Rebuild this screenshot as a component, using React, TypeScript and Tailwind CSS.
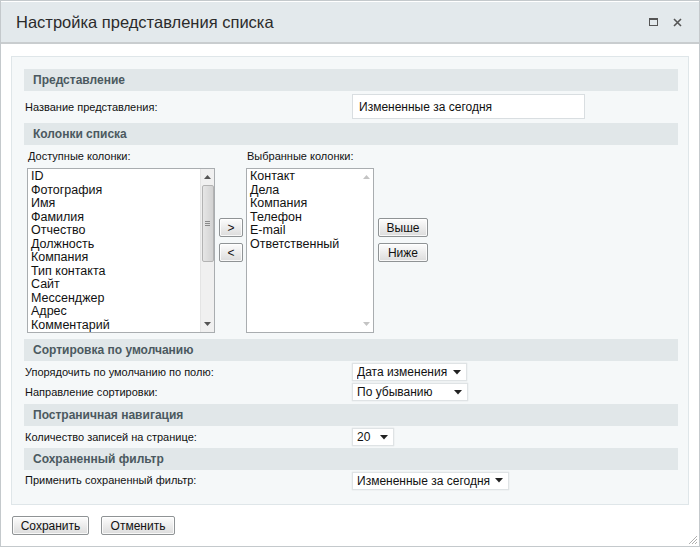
import React from "react";

const font = { fontFamily: '"Liberation Sans", Arial, sans-serif' };

function SectionHeader({ children }: { children: React.ReactNode }) {
  return (
    <div className="h-[22px] bg-[#e1e7e9] pl-[9px] flex items-center text-[12px] font-bold text-[#4b5960]">
      {children}
    </div>
  );
}

function Select({ value, width }: { value: string; width: number }) {
  return (
    <div
      className="h-[18px] bg-white border border-[#dfe3e5] shadow-[0_0_1px_rgba(0,0,0,0.15)] flex items-center pl-[4px] pr-[5px] text-[12px] text-[#111]"
      style={{ width }}
    >
      <span className="flex-1 whitespace-nowrap overflow-hidden">{value}</span>
      <svg width="8" height="5" viewBox="0 0 8 5" className="ml-[4px] shrink-0">
        <path d="M0 0 H8 L4 4.5 Z" fill="#222" />
      </svg>
    </div>
  );
}

function Btn({ children, w, h = 19 }: { children: React.ReactNode; w: number; h?: number }) {
  return (
    <div
      className="flex items-center justify-center rounded-[2px] border border-[#8f9395] bg-gradient-to-b from-[#fdfdfd] to-[#dcdcdc] shadow-[inset_0_0_0_1px_rgba(255,255,255,0.8)] text-[12px] text-[#111]"
      style={{ width: w, height: h }}
    >
      {children}
    </div>
  );
}

function ScrollArrow({ up, color }: { up?: boolean; color: string }) {
  return (
    <svg width="7" height="4" viewBox="0 0 7 4">
      <path d={up ? "M0 4 L3.5 0 L7 4 Z" : "M0 0 L7 0 L3.5 4 Z"} fill={color} />
    </svg>
  );
}

export default function App() {
  const left = [
    "ID",
    "Фотография",
    "Имя",
    "Фамилия",
    "Отчество",
    "Должность",
    "Компания",
    "Тип контакта",
    "Сайт",
    "Мессенджер",
    "Адрес",
    "Комментарий",
  ];
  const right = ["Контакт", "Дела", "Компания", "Телефон", "E-mail", "Ответственный"];

  return (
    <div style={font} className="w-[700px] h-[547px] bg-white relative flex flex-col border border-[#c4c9cc] overflow-hidden text-[#111]">
      {/* Title bar */}
      <div className="h-[42px] mt-[1px] bg-[#e3e9ec] border-b-2 border-[#c9cdcf] flex items-center pl-[15px] pr-[17px]">
        <div className="flex-1 text-[16.5px] text-[#2b2b2b]">Настройка представления списка</div>
        <div className="flex items-center gap-[15px]">
          <div className="w-[9px] h-[8px] border border-[#555] border-t-2" />
          <svg width="9" height="9" viewBox="0 0 9 9">
            <path d="M1 1 L8 8 M8 1 L1 8" stroke="#555" strokeWidth="1.6" />
          </svg>
        </div>
      </div>

      {/* Content */}
      <div className="px-[10px] pt-[12px]">
        <div className="bg-[#f5f8f9] border border-[#dfe6e9] pl-[12px] pr-[10px] pt-[12px] pb-[13px]">
          <SectionHeader>Представление</SectionHeader>
          <div className="h-[32px] flex items-start text-[11px]">
            <div className="w-[328px] pl-[1px] h-full flex items-center">Название представления:</div>
            <div className="mt-[3px] w-[233px] h-[25px] bg-white border border-[#d9dee1] flex items-center pl-[6px] text-[12px]">
              Измененные за сегодня
            </div>
          </div>

          <SectionHeader>Колонки списка</SectionHeader>
          <div className="flex pl-[3px] h-[194px]">
            <div className="flex flex-col w-[188px]">
              <div className="h-[23px] flex items-center text-[11px] pl-[1px]">Доступные колонки:</div>
              <div className="h-[165px] bg-white border border-[#a9adb0] flex overflow-hidden">
                <div className="flex-1 pl-[3px] pt-[1px] text-[12.5px] leading-[13.5px] overflow-hidden">
                  {left.map((t) => (
                    <div key={t} className="whitespace-nowrap">{t}</div>
                  ))}
                </div>
                <div className="w-[14px] bg-[#f0f0f0] border-l border-[#e4e4e4] flex flex-col items-center">
                  <div className="h-[16px] flex items-center justify-center">
                    <ScrollArrow up color="#555" />
                  </div>
                  <div className="w-[12px] h-[77px] rounded-[2px] border border-[#b3b3b3] bg-gradient-to-r from-[#e6e6e6] to-[#d2d2d2] flex items-center justify-center">
                    <div className="flex flex-col gap-[1px]">
                      <div className="w-[5px] h-[1px] bg-[#8a8a8a]" />
                      <div className="w-[5px] h-[1px] bg-[#8a8a8a]" />
                      <div className="w-[5px] h-[1px] bg-[#8a8a8a]" />
                    </div>
                  </div>
                  <div className="flex-1" />
                  <div className="h-[16px] flex items-center justify-center">
                    <ScrollArrow color="#555" />
                  </div>
                </div>
              </div>
            </div>

            <div className="w-[31px] flex flex-col items-start pl-[4px] pt-[73px] gap-[6px]">
              <Btn w={24}>&gt;</Btn>
              <Btn w={24}>&lt;</Btn>
            </div>

            <div className="flex flex-col w-[128px]">
              <div className="h-[23px] flex items-center text-[11px] pl-[1px]">Выбранные колонки:</div>
              <div className="h-[165px] bg-white border border-[#a9adb0] flex overflow-hidden">
                <div className="flex-1 pl-[3px] pt-[1px] text-[12.5px] leading-[13.5px]">
                  {right.map((t) => (
                    <div key={t} className="whitespace-nowrap">{t}</div>
                  ))}
                </div>
                <div className="w-[14px] flex flex-col items-center">
                  <div className="h-[16px] flex items-center justify-center">
                    <ScrollArrow up color="#c4c4c4" />
                  </div>
                  <div className="flex-1" />
                  <div className="h-[16px] flex items-center justify-center">
                    <ScrollArrow color="#c4c4c4" />
                  </div>
                </div>
              </div>
            </div>

            <div className="flex flex-col pl-[4px] pt-[73px] gap-[6px]">
              <Btn w={50}>Выше</Btn>
              <Btn w={50}>Ниже</Btn>
            </div>
          </div>

          <SectionHeader>Сортировка по умолчанию</SectionHeader>
          <div className="flex flex-col pt-[2px] pb-[3px] gap-[2px]">
            <div className="flex items-center text-[11px] h-[18px]">
              <div className="w-[328px] pl-[1px]">Упорядочить по умолчанию по полю:</div>
              <Select value="Дата изменения" width={115} />
            </div>
            <div className="flex items-center text-[11px] h-[18px]">
              <div className="w-[328px] pl-[1px]">Направление сортировки:</div>
              <Select value="По убыванию" width={116} />
            </div>
          </div>

          <SectionHeader>Постраничная навигация</SectionHeader>
          <div className="flex items-center text-[11px] h-[22px]">
            <div className="w-[328px] pl-[1px]">Количество записей на странице:</div>
            <Select value="20" width={42} />
          </div>

          <SectionHeader>Сохраненный фильтр</SectionHeader>
          <div className="flex items-center text-[11px] h-[21px]">
            <div className="w-[328px] pl-[1px]">Применить сохраненный фильтр:</div>
            <Select value="Измененные за сегодня" width={157} />
          </div>
        </div>

        <div className="flex gap-[12px] mt-[11px] pl-[1px]">
          <Btn w={77}>Сохранить</Btn>
          <Btn w={74}>Отменить</Btn>
        </div>
      </div>

      {/* resize grip */}
      <svg className="absolute right-[1px] bottom-[1px]" width="11" height="11" viewBox="0 0 11 11">
        <path d="M10 2 L2 10 M10 5 L5 10 M10 8 L8 10" stroke="#b0b0b0" strokeWidth="1" />
      </svg>
    </div>
  );
}
